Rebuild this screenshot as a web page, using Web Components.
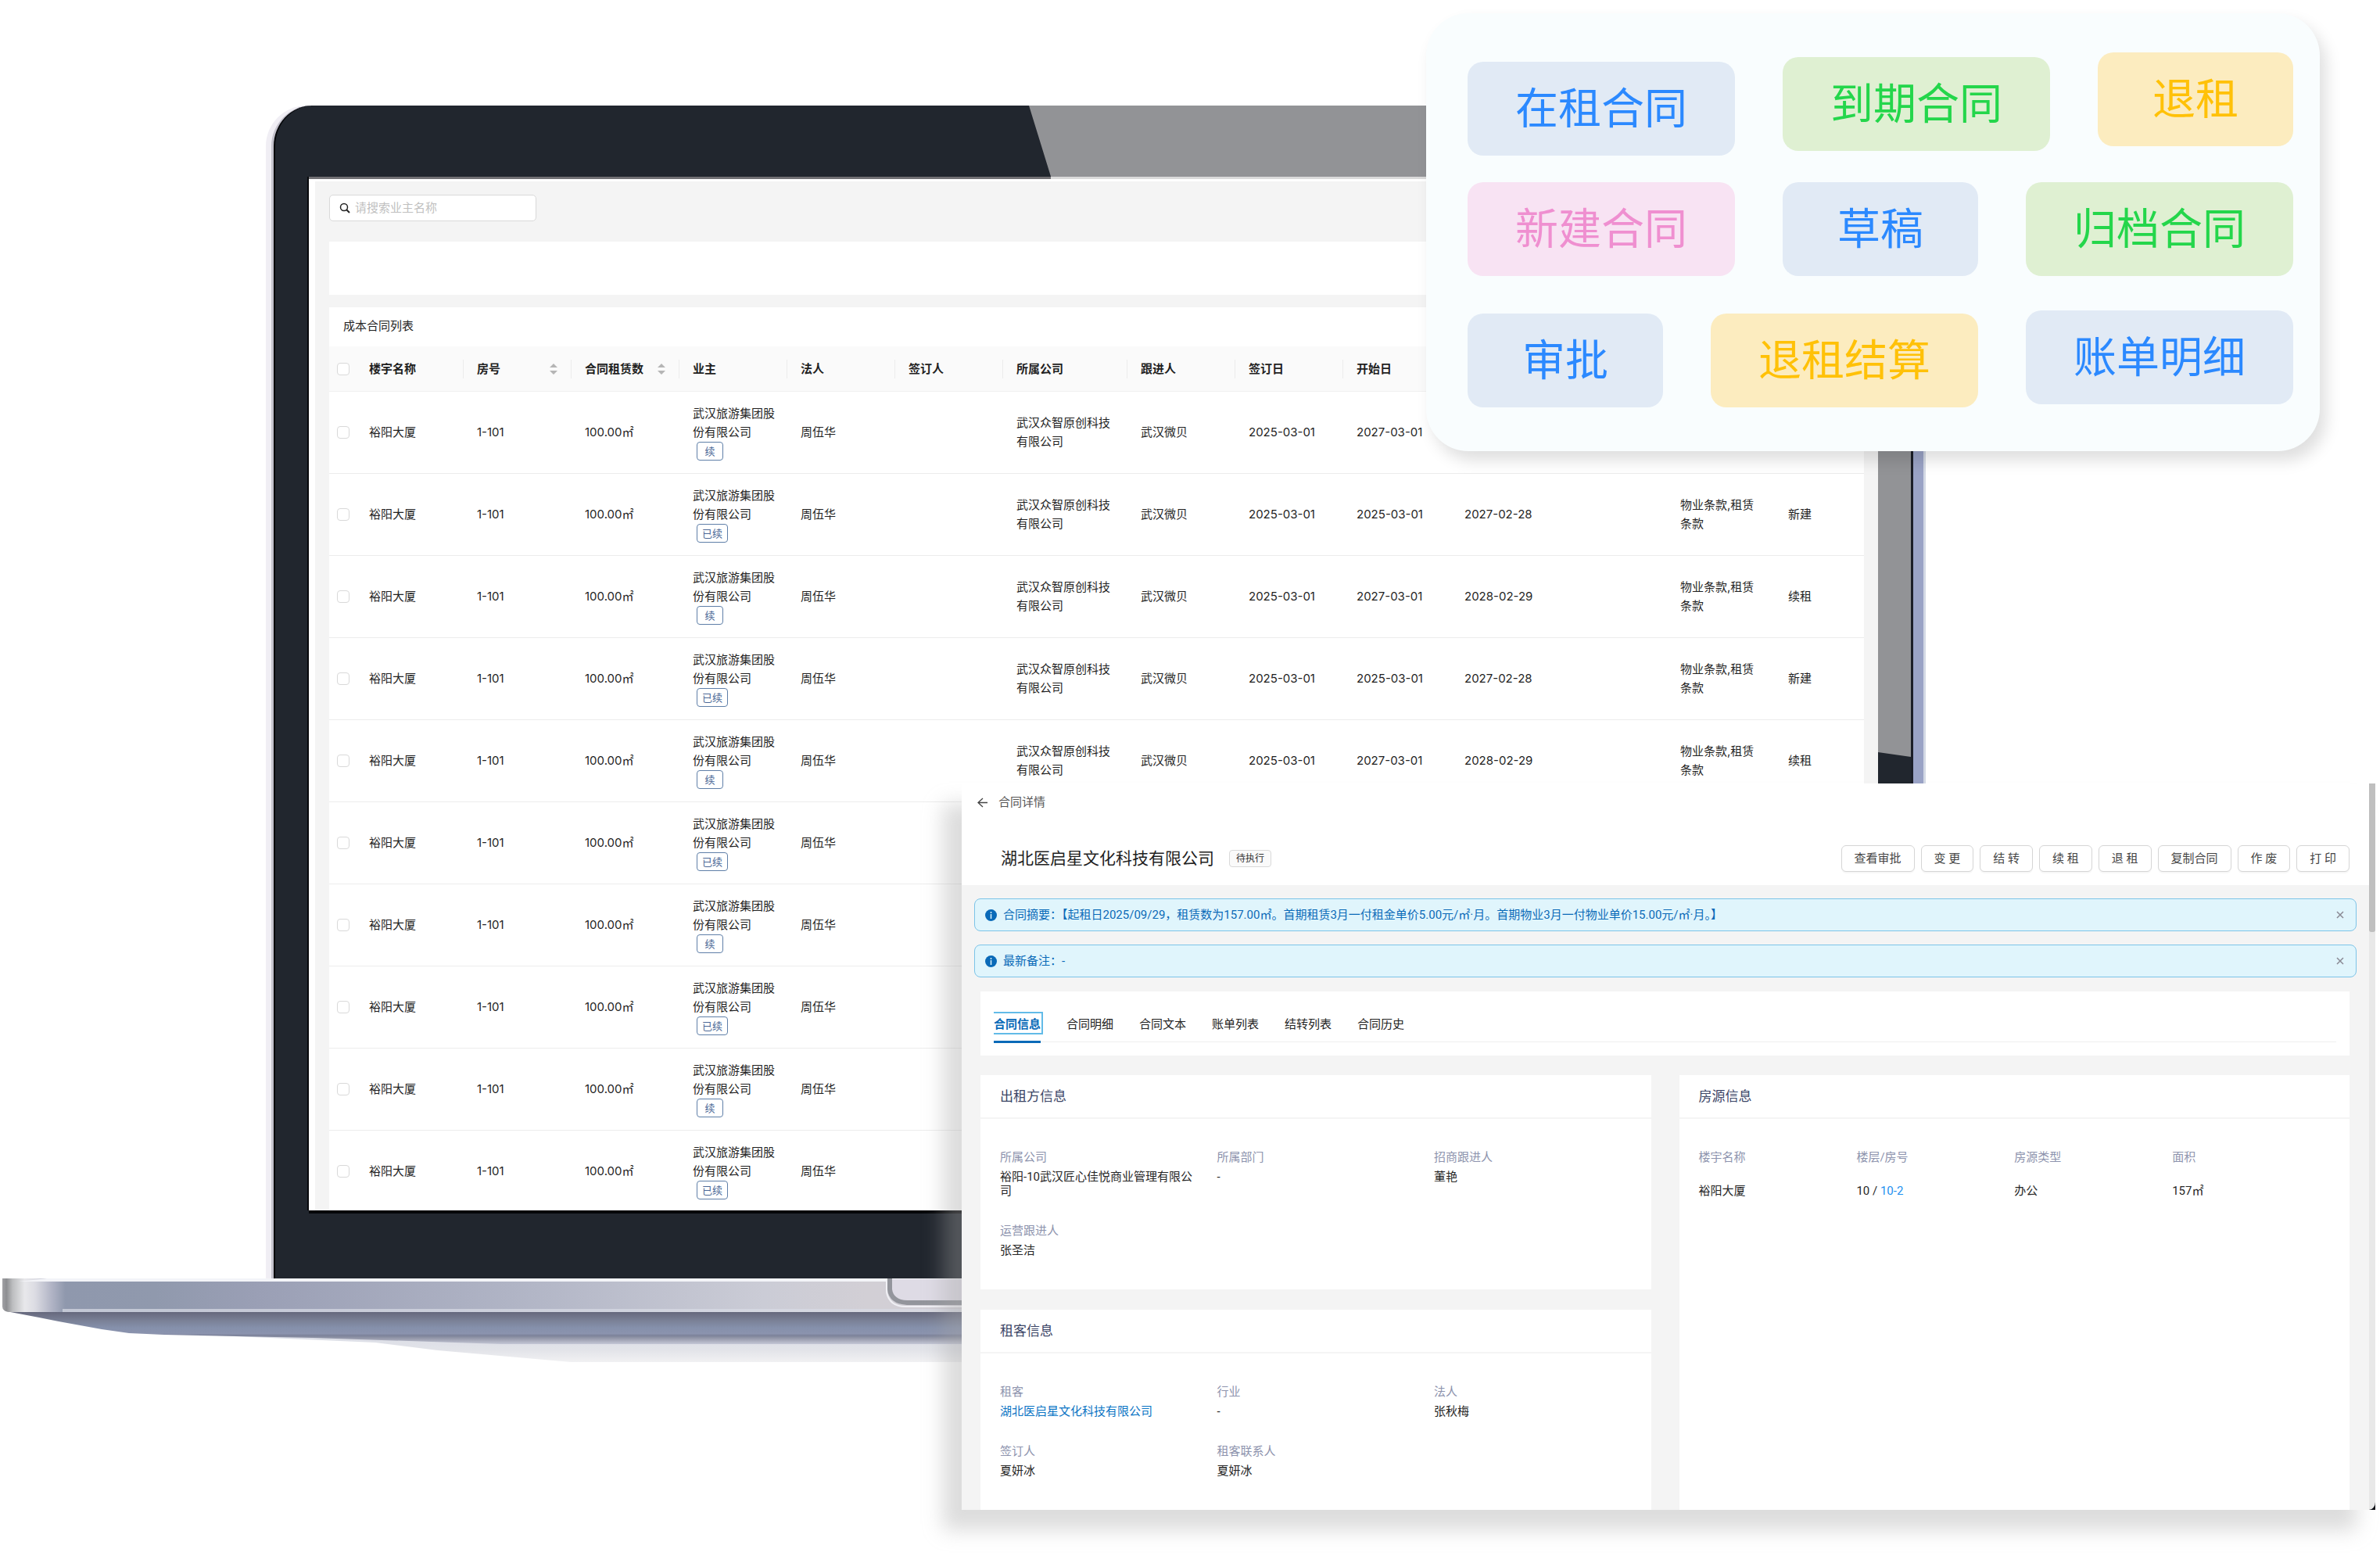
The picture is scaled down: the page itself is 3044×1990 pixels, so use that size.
<!DOCTYPE html>
<html lang="zh-CN">
<head>
<meta charset="utf-8">
<title>合同管理</title>
<style>
  * {
    box-sizing: border-box;
  }
  body {
    margin: 0;
    background: #fff;
    color: #1f1f1f;
    font-family: Inter, "Noto Sans CJK SC", sans-serif;
    font-size: 15px;
    line-height: 24px;
  }
</style>
</head>
<body>

<contract-scene>
  <laptop-frame>
    <cost-contracts></cost-contracts>
  </laptop-frame>

  <tag-board slot="board">
    <contract-tag slot="first" tone="blue" place="end">在租合同</contract-tag>
    <contract-tag slot="first" tone="green" place="center">到期合同</contract-tag>
    <contract-tag slot="first" tone="yellow" place="start">退租</contract-tag>

    <contract-tag slot="second" tone="pink">新建合同</contract-tag>
    <contract-tag slot="second" tone="blue">草稿</contract-tag>
    <contract-tag slot="second" tone="green">归档合同</contract-tag>

    <contract-tag slot="third" tone="blue" place="end">审批</contract-tag>
    <contract-tag slot="third" tone="yellow" place="end">退租结算</contract-tag>
    <contract-tag slot="third" tone="blue" place="start">账单明细</contract-tag>
  </tag-board>

  <contract-detail slot="detail">
    <info-alert slot="alerts">合同摘要：【起租日2025/09/29，租赁数为157.00㎡。首期租赁3月一付租金单价5.00元/㎡·月。首期物业3月一付物业单价15.00元/㎡·月。】</info-alert>
    <info-alert slot="alerts">最新备注：-</info-alert>

    <info-card slot="left" heading="出租方信息" columns="3">
      <info-field label="所属公司">裕阳-10武汉匠心佳悦商业管理有限公司</info-field>
      <info-field label="所属部门">-</info-field>
      <info-field label="招商跟进人">董艳</info-field>
      <info-field label="运营跟进人">张圣洁</info-field>
    </info-card>
    <info-card slot="left" heading="租客信息" columns="3">
      <info-field label="租客"><a href="#tenant" style="color: #0b74c4; text-decoration: none">湖北医启星文化科技有限公司</a></info-field>
      <info-field label="行业">-</info-field>
      <info-field label="法人">张秋梅</info-field>
      <info-field label="签订人">夏妍冰</info-field>
      <info-field label="租客联系人">夏妍冰</info-field>
    </info-card>
    <info-card slot="right" heading="房源信息" columns="4">
      <info-field label="楼宇名称" loose>裕阳大厦</info-field>
      <info-field label="楼层/房号" loose>10 / <a href="#room" style="color: #1e90f0; text-decoration: none">10-2</a></info-field>
      <info-field label="房源类型" loose>办公</info-field>
      <info-field label="面积" loose>157㎡</info-field>
    </info-card>
  </contract-detail>
</contract-scene>

<script>
class BaseElement extends HTMLElement {

  constructor() {

    super();
    this.attachShadow({ mode: 'open' });
  }

  render() {

    const template = document.createElement('template');

    template.innerHTML = `
      <style>
        * {
          margin: 0;
          padding: 0;
          box-sizing: border-box;
        }
        button,
        input {
          font: inherit;
        }
      </style>
      ${this.getStyle()}
      ${this.getTemplate()}
    `;
    this.shadowRoot.replaceChildren(template.content.cloneNode(true));
  }

  connectedCallback() {

    this.render();
  }
}

class ContractScene extends BaseElement {

  getTemplate() {

    return `
      <slot></slot>
      <slot name="board"></slot>
      <slot name="detail"></slot>
    `;
  }

  // the board and the detail window float over the laptop
  getStyle() {

    return `
      <style>
        :host {
          display: block;
          position: relative;
          min-height: 100vh;
          padding-top: 135px;
          overflow: hidden;
        }
        slot[name="board"]::slotted(*) {
          position: absolute;
          top: 17px;
          left: 1824px;
          right: 77px;
        }
        slot[name="detail"]::slotted(*) {
          position: absolute;
          top: 1002px;
          left: 1230px;
          right: 6px;
        }
      </style>
    `;
  }
}

class LaptopFrame extends BaseElement {

  getTemplate() {

    return `
      <div class="lid">
        <div class="screen"><slot></slot></div>
      </div>
      <svg class="base" viewBox="0 0 1300 110" width="1300" height="110" aria-hidden="true">
        <defs>
          <linearGradient id="body" gradientUnits="userSpaceOnUse" x1="3" y1="0" x2="1303" y2="0">
            <stop offset="0" stop-color="#a2a2a6"/>
            <stop offset=".004" stop-color="#8d8e91"/>
            <stop offset=".01" stop-color="#bcbdbf"/>
            <stop offset=".022" stop-color="#e8e8eb"/>
            <stop offset=".032" stop-color="#dcdce3"/>
            <stop offset=".048" stop-color="#b2b5c6"/>
            <stop offset=".062" stop-color="#8f98ad"/>
            <stop offset=".15" stop-color="#9099ad"/>
            <stop offset=".25" stop-color="#9a9fb5"/>
            <stop offset=".5" stop-color="#b0b4c5"/>
            <stop offset=".75" stop-color="#cbccd6"/>
            <stop offset=".85" stop-color="#d2cfd5"/>
            <stop offset="1" stop-color="#d2cfd8"/>
          </linearGradient>
          <linearGradient id="under" gradientUnits="userSpaceOnUse" x1="0" y1="42" x2="0" y2="84">
            <stop offset="0" stop-color="#62657a"/>
            <stop offset=".1" stop-color="#6c6f84"/>
            <stop offset=".3" stop-color="#7b8298"/>
            <stop offset=".5" stop-color="#8590ab"/>
            <stop offset=".68" stop-color="#8b93ae"/>
            <stop offset=".74" stop-color="#7c8299"/>
            <stop offset=".85" stop-color="#9c9fb0"/>
            <stop offset="1" stop-color="#c4c7d6"/>
          </linearGradient>
          <linearGradient id="fade" x1="0" y1="0" x2="0" y2="1">
            <stop offset="0" stop-color="#d9dce6"/>
            <stop offset=".6" stop-color="#e3e4e9"/>
            <stop offset="1" stop-color="#f1f1f3"/>
          </linearGradient>
        </defs>
        <path d="M210 70 L480 82 L560 92 L730 107 H1300 V70Z" fill="url(#fade)"/>
        <path d="M8 42 L50 50 L75 55 L130 65 L165 70 L210 72 L400 76 L640 84 H1300 V41 H6Z" fill="url(#under)"/>
        <path d="M3 0 H1300 V43 H12 Q3 42 3 36Z" fill="url(#body)"/>
        <path d="M60 0 H1300 V4 H24Z" fill="#f3f4f8"/>
        <path d="M80 39 H1300 V43 H80Z" fill="#d9dbe6" opacity=".7"/>
        <path d="M1137 1 V14 Q1139 34 1162 34 H1300 V1Z" fill="#dedbe5"/>
        <path d="M1138 0 V14 Q1140 30 1160 31 H1300" fill="none" stroke="#93959c" stroke-width="6"/>
        <path d="M1134 2 V18 Q1138 36 1158 36 H1300" fill="none" stroke="#f0f0f5" stroke-width="2"/>
      </svg>
    `;
  }

  getStyle() {

    return `
      <style>
        :host {
          display: block;
        }
        .lid {
          position: relative;
          margin: 0 584px 0 347px;
          padding: 91px 45px 87px;
          border-left: 3px solid #c4c2cc;
          border-right: 13px solid #9aa3c6;
          border-radius: 52px 52px 0 0;
          background: #21262e;
          box-shadow: -7px 0 0 #f0eef4, 3px 0 0 #d3d9e4, inset 2px 0 0 #050609, inset -3px 0 0 #1b1e28;
        }
        /* light falling across the glass */
        .lid::before {
          content: "";
          position: absolute;
          inset: 0 3px 0 0;
          background: #929396;
          clip-path: polygon(966px 0, 100% 0, 100% 833px, calc(100% - 42px) 827px, 995px 827px, 995px 94px);
        }
        .screen {
          position: relative;
          height: 1322px;
          padding: 6px 0 0 8px;
          overflow: hidden;
          background: linear-gradient(90deg, #717074 949px, #dadada 0) top / 100% 3px no-repeat #fff;
          box-shadow: -2px 0 0 #07080b, 0 4px 0 #050609;
        }
        .base {
          display: block;
        }
      </style>
    `;
  }
}

const building = '裕阳大厦';
const contracts = [
  { tag: '续', start: '2027-03-01', end: '', terms: '', kind: '' },
  { tag: '已续', start: '2025-03-01', end: '2027-02-28', terms: '物业条款,租赁条款', kind: '新建' },
  { tag: '续', start: '2027-03-01', end: '2028-02-29', terms: '物业条款,租赁条款', kind: '续租' },
  { tag: '已续', start: '2025-03-01', end: '2027-02-28', terms: '物业条款,租赁条款', kind: '新建' },
  { tag: '续', start: '2027-03-01', end: '2028-02-29', terms: '物业条款,租赁条款', kind: '续租' },
  { tag: '已续' },
  { tag: '续' },
  { tag: '已续' },
  { tag: '续' },
  { tag: '已续' }
];

class CostContracts extends BaseElement {

  getHeadCell(title, sortable) {

    if(sortable) {

      return `
        <th><div class="sort">${title}
          <svg width="10" height="14" viewBox="0 0 10 14" aria-hidden="true"><path d="M5 0 L10 5 H0Z M0 9 H10 L5 14Z" fill="#b5b5b5"/></svg>
        </div></th>
      `;
    }
    return `<th>${title}</th>`;
  }

  getRow(row) {

    // rows under the detail window carry only their left half
    const full = row.start !== undefined;

    return `
      <tr>
        <td class="check"><input type="checkbox" aria-label="${building}"></td>
        <td>${building}</td>
        <td>1-101</td>
        <td>100.00㎡</td>
        <td>武汉旅游集团股份有限公司<span class="tag">${row.tag}</span></td>
        <td>周伍华</td>
        <td></td>
        <td>${full ? '武汉众智原创科技有限公司' : ''}</td>
        <td>${full ? '武汉微贝' : ''}</td>
        <td>${full ? '2025-03-01' : ''}</td>
        <td>${row.start || ''}</td>
        <td>${row.end || ''}</td>
        <td></td>
        <td>${row.terms || ''}</td>
        <td>${row.kind || ''}</td>
      </tr>
    `;
  }

  getTemplate() {

    const heads = ['楼宇名称', '房号', '合同租赁数', '业主', '法人', '签订人', '所属公司', '跟进人', '签订日', '开始日', '', '', '', ''];
    const sortable = ['房号', '合同租赁数'];

    return `
      <label class="search">
        <svg width="14" height="14" viewBox="0 0 14 14" aria-hidden="true">
          <circle cx="6" cy="6" r="4.500" fill="none" stroke="#222" stroke-width="1.500"/>
          <path d="M9 9 L13 13" stroke="#222" stroke-width="2"/>
        </svg>
        <input type="text" placeholder="请搜索业主名称" aria-label="请搜索业主名称">
      </label>
      <div class="filters"></div>
      <section>
        <h2>成本合同列表</h2>
        <table>
          <colgroup>
            <col class="narrow"><col><col><col><col><col><col><col class="wide">
            <col><col><col><col><col><col><col class="rest">
          </colgroup>
          <thead>
            <tr>
              <th class="check"><input type="checkbox" aria-label="全选"></th>
              ${heads.map((head) => this.getHeadCell(head, sortable.includes(head))).join('')}
            </tr>
          </thead>
          <tbody>${contracts.map((row) => this.getRow(row)).join('')}</tbody>
        </table>
      </section>
    `;
  }

  getStyle() {

    return `
      <style>
        :host {
          display: block;
          padding: 17px 18px 0;
          background: #f4f4f4;
        }
        .search {
          display: flex;
          align-items: center;
          gap: 6px;
          width: 265px;
          height: 34px;
          padding: 0 12px;
          border: 1px solid #d9d9d9;
          border-radius: 5px;
          background: #fff;
        }
        .search input {
          flex: 1;
          min-width: 0;
          border: 0;
          outline: 0;
          background: none;
        }
        .search input::placeholder {
          color: #bfbfbf;
        }
        .filters {
          height: 68px;
          margin: 26px 0 16px;
          background: #fff;
        }
        section {
          background: #fff;
        }
        h2 {
          height: 50px;
          padding: 0 18px;
          font-size: 15px;
          font-weight: 400;
          line-height: 48px;
        }
        table {
          width: 100%;
          border-collapse: separate;
          border-spacing: 0;
          table-layout: fixed;
        }
        col {
          width: 138px;
        }
        .narrow {
          width: 34px;
        }
        .wide {
          width: 159px;
        }
        .rest {
          width: auto;
        }
        th {
          height: 58px;
          padding: 0 18px 0 17px;
          border-bottom: 1px solid #f0f0f0;
          background: linear-gradient(#ececec, #ececec) right center / 1px 24px no-repeat #fafafa;
          font-weight: 700;
          text-align: left;
        }
        th.check,
        th:last-child {
          background: #fafafa;
        }
        .sort {
          display: flex;
          align-items: center;
          justify-content: space-between;
          white-space: nowrap;
        }
        td {
          height: 105px;
          padding: 0 16px 0 17px;
          border-bottom: 1px solid #ececec;
          vertical-align: middle;
        }
        .check {
          padding: 0 0 0 10px;
        }
        .check input {
          display: block;
          appearance: none;
          width: 16px;
          height: 16px;
          border: 1px solid #d9d9d9;
          border-radius: 4px;
          background: #fff;
        }
        .tag {
          display: block;
          width: fit-content;
          min-width: 34px;
          margin-left: 5px;
          padding: 0 6px;
          border: 1px solid #5f7fa8;
          border-radius: 4px;
          color: #4a6796;
          font-size: 13px;
          line-height: 22px;
          text-align: center;
        }
      </style>
    `;
  }
}

class TagBoard extends BaseElement {

  getTemplate() {

    return `
      <div class="row tall"><slot name="first"></slot></div>
      <div class="row"><slot name="second"></slot></div>
      <div class="row low"><slot name="third"></slot></div>
    `;
  }

  getStyle() {

    return `
      <style>
        :host {
          display: block;
          padding: 50px 34px 56px 53px;
          border-radius: 54px;
          background: #f9fdfe;
          box-shadow: 8px 12px 20px rgba(0, 0, 0, .13);
        }
        .row {
          display: flex;
          justify-content: space-between;
          min-height: 120px;
        }
        .tall {
          min-height: 132px;
          margin-bottom: 34px;
        }
        .low {
          min-height: 124px;
          margin-top: 44px;
        }
      </style>
    `;
  }
}

class ContractTag extends BaseElement {

  getTemplate() {

    return `<slot></slot>`;
  }

  getStyle() {

    const tones = {
      blue: ['#e1eaf5', '#2b89ff'],
      green: ['#dff0d2', '#24d64b'],
      yellow: ['#fcecbf', '#ffc107'],
      pink: ['#f8e3f3', '#ef8fd0']
    };
    const [background, color] = tones[this.getAttribute('tone')];

    return `
      <style>
        :host {
          display: block;
          align-self: ${this.getAttribute('place') || 'start'};
          min-width: 250px;
          padding: 0 61px 10px;
          border-radius: 20px;
          background: ${background};
          color: ${color};
          font-family: "Noto Sans CJK SC", sans-serif;
          font-size: 55px;
          font-weight: 400;
          line-height: 110px;
          text-align: center;
        }
      </style>
    `;
  }
}

class ContractDetail extends BaseElement {

  getTemplate() {

    const actions = ['查看审批', '变 更', '结 转', '续 租', '退 租', '复制合同', '作 废', '打 印'];
    const tabs = ['合同信息', '合同明细', '合同文本', '账单列表', '结转列表', '合同历史'];

    return `
      <header>
        <div class="back">
          <svg width="13" height="13" viewBox="0 0 13 13" aria-hidden="true"><path d="M7 1 L1 6.500 L7 12 M1 6.500 H13" fill="none" stroke="#444" stroke-width="1.300"/></svg>
          <span>合同详情</span>
        </div>
        <div class="title">
          <h1>湖北医启星文化科技有限公司</h1>
          <span class="state">待执行</span>
          <div class="actions">${actions.map((action) => `<button type="button">${action}</button>`).join('')}</div>
        </div>
      </header>
      <div class="alerts"><slot name="alerts"></slot></div>
      <nav>
        <div class="tabs">${tabs.map((tab, i) => `<button type="button" class="${i ? '' : 'active'}">${tab}</button>`).join('')}</div>
      </nav>
      <div class="cards">
        <div class="column"><slot name="left"></slot></div>
        <div class="column fill"><slot name="right"></slot></div>
      </div>
      <div class="scrollbar"><div class="track"><div class="thumb"></div></div></div>
    `;
  }

  getStyle() {

    return `
      <style>
        :host {
          display: block;
          background: #f4f4f4;
          box-shadow: -24px 26px 24px rgba(165, 165, 165, .39);
          font-family: Roboto, "Noto Sans CJK SC", sans-serif;
        }
        header {
          padding: 9px 33px 17px 20px;
          background: #fff;
        }
        .back {
          display: flex;
          align-items: center;
          gap: 14px;
          height: 30px;
          margin-bottom: 40px;
          color: #555;
        }
        .title {
          display: flex;
          align-items: center;
          padding-left: 30px;
        }
        h1 {
          font-size: 21px;
          font-weight: 400;
          line-height: 34px;
        }
        .state {
          margin-left: 19px;
          padding: 0 8px;
          border: 1px solid #d9d9d9;
          border-radius: 4px;
          background: #fafafa;
          color: #333;
          font-size: 12px;
          line-height: 20px;
        }
        .actions {
          display: flex;
          gap: 8px;
          margin-left: auto;
        }
        .actions button {
          height: 34px;
          padding: 0 16px;
          border: 1px solid #d5d5d5;
          border-radius: 6px;
          background: #fff;
          box-shadow: 0 2px 0 rgba(0, 0, 0, .03);
          color: #444;
          white-space: nowrap;
        }
        .alerts {
          display: flex;
          flex-direction: column;
          gap: 17px;
          padding: 17px 24px 18px 16px;
        }
        nav {
          margin: 0 33px 0 24px;
          padding: 26px 17px 17px;
          background: #fff;
        }
        .tabs {
          display: flex;
          gap: 33px;
          height: 39px;
          border-bottom: 1px solid #efefef;
        }
        .tabs button {
          position: relative;
          height: 40px;
          padding-bottom: 9px;
          border: 0;
          background: none;
          color: #222;
          white-space: nowrap;
        }
        .tabs .active {
          border-bottom: 3px solid #0a6ab8;
          padding-bottom: 6px;
          color: #0a6ab8;
          font-weight: 700;
        }
        /* focus ring, cut at the edge of the tab strip */
        .tabs .active::before {
          content: "";
          position: absolute;
          inset: 0 -3px 8px 0;
          border: 2px solid #62bbe8;
          border-left: 0;
        }
        .cards {
          display: grid;
          grid-template-columns: repeat(2, minmax(0, 1fr));
          gap: 36px;
          padding: 25px 33px 0 24px;
        }
        .column {
          display: flex;
          flex-direction: column;
          gap: 26px;
        }
        .fill ::slotted(*) {
          flex: 1;
        }
        .scrollbar {
          position: absolute;
          top: 0;
          right: 0;
          bottom: 0;
          width: 8px;
          background: #0b0d14;
        }
        .track {
          height: 100%;
          border-bottom-right-radius: 8px 10px;
          background: #e8e8e8;
        }
        .thumb {
          height: 190px;
          border-radius: 0 0 3px 3px;
          background: #bfbfbf;
        }
      </style>
    `;
  }
}

class InfoAlert extends BaseElement {

  getTemplate() {

    return `
      <svg width="15" height="15" viewBox="0 0 15 15" aria-hidden="true">
        <circle cx="7.500" cy="7.500" r="7.500" fill="#0a6ab8"/>
        <path d="M7.500 3 V5 M7.500 6 V12" stroke="#e0f5fc" stroke-width="1.500"/>
      </svg>
      <p><slot></slot></p>
      <button type="button" aria-label="关闭">
        <svg width="10" height="10" viewBox="0 0 10 10"><path d="M1 1 L9 9 M9 1 L1 9" stroke="#8a8a94" stroke-width="1.500"/></svg>
      </button>
    `;
  }

  getStyle() {

    return `
      <style>
        :host {
          display: flex;
          align-items: center;
          gap: 8px;
          height: 42px;
          padding: 0 15px 0 13px;
          border: 1px solid #7cc4e8;
          border-radius: 8px;
          background: #e0f5fc;
          color: #0a6ab8;
        }
        p {
          flex: 1;
        }
        button {
          display: flex;
          border: 0;
          background: none;
        }
      </style>
    `;
  }
}

class InfoCard extends BaseElement {

  getTemplate() {

    return `
      <h2>${this.getAttribute('heading')}</h2>
      <div class="fields"><slot></slot></div>
    `;
  }

  getStyle() {

    const columns = Number(this.getAttribute('columns'));

    return `
      <style>
        :host {
          display: block;
          background: #fff;
        }
        h2 {
          padding: 0 25px;
          border-bottom: 2px solid #f5f5f5;
          color: #3b4566;
          font-size: 17px;
          font-weight: 400;
          line-height: 54px;
        }
        .fields {
          display: grid;
          grid-template-columns: repeat(${columns}, minmax(0, 1fr));
          row-gap: 33px;
          padding: 40px ${columns === 4 ? 25 : 0}px 41px 25px;
        }
      </style>
    `;
  }
}

class InfoField extends BaseElement {

  getTemplate() {

    return `
      <p class="label">${this.getAttribute('label')}</p>
      <p><slot></slot></p>
    `;
  }

  getStyle() {

    return `
      <style>
        :host {
          display: block;
          padding-right: 20px;
          color: #262626;
          line-height: 18px;
        }
        .label {
          margin-bottom: ${this.hasAttribute('loose') ? 25 : 7}px;
          color: #8d93ad;
        }
      </style>
    `;
  }
}

customElements.define('contract-scene', ContractScene);
customElements.define('laptop-frame', LaptopFrame);
customElements.define('cost-contracts', CostContracts);
customElements.define('tag-board', TagBoard);
customElements.define('contract-tag', ContractTag);
customElements.define('contract-detail', ContractDetail);
customElements.define('info-alert', InfoAlert);
customElements.define('info-card', InfoCard);
customElements.define('info-field', InfoField);
</script>
</body>
</html>
